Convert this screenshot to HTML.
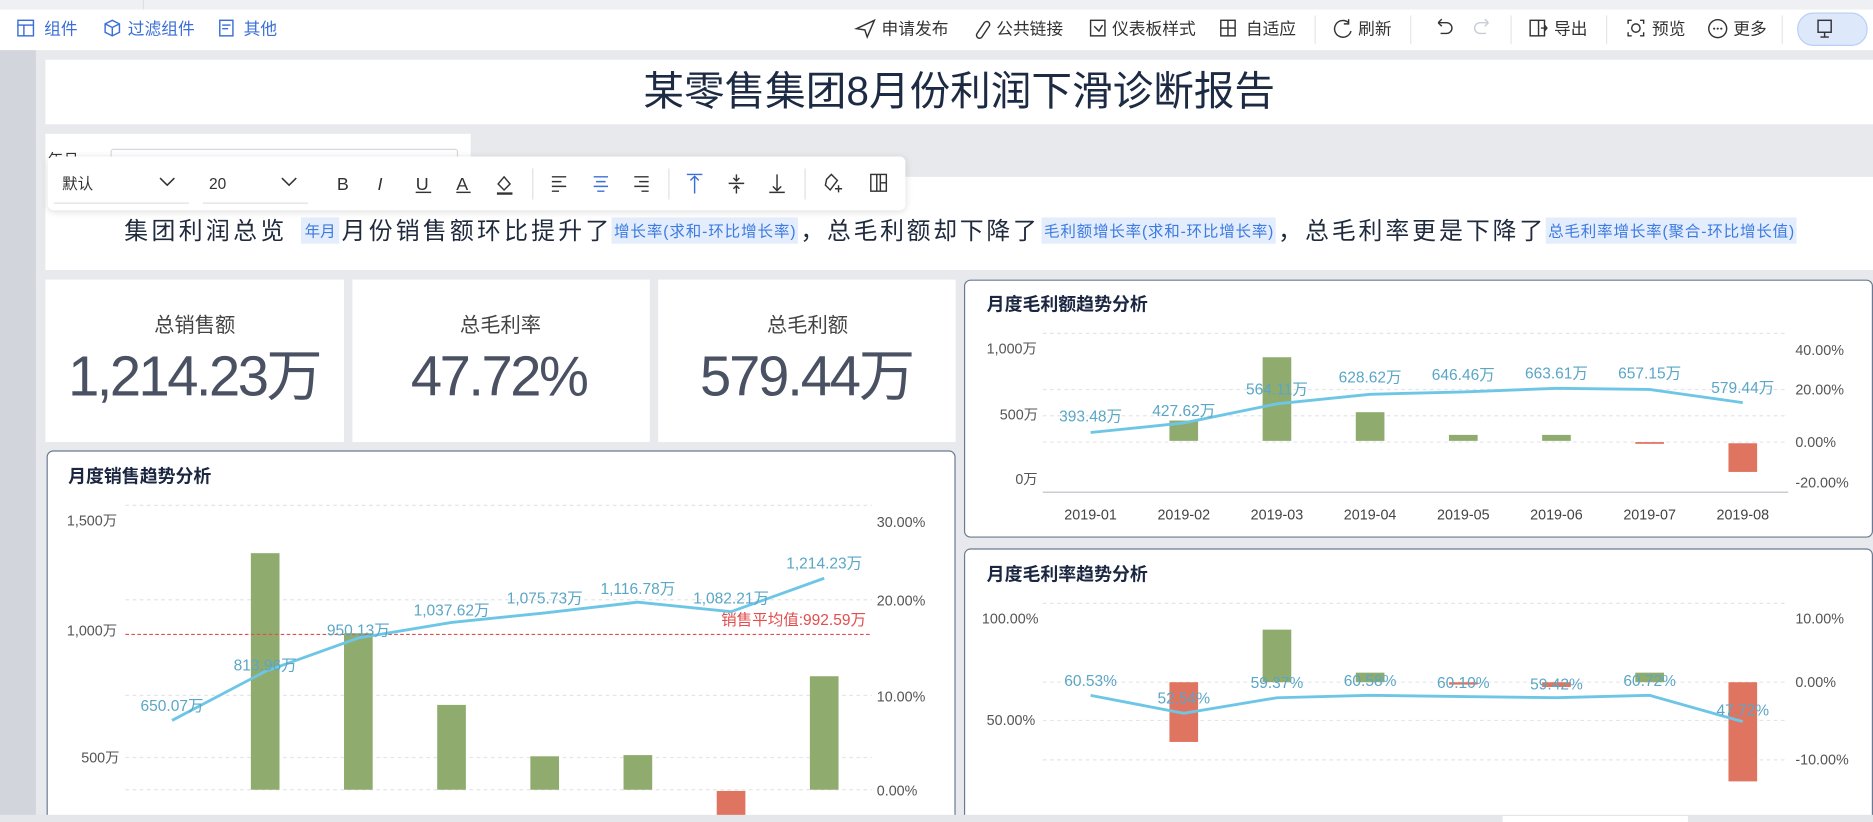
<!DOCTYPE html>
<html><head><meta charset="utf-8"><style>
html,body{margin:0;padding:0;width:1873px;height:822px;overflow:hidden;background:#e8e9ed}
svg{display:block;font-family:"Liberation Sans","Noto Sans CJK SC",sans-serif}
</style></head><body>
<svg width="1873" height="822" viewBox="0 0 1568 688" preserveAspectRatio="none" xmlns="http://www.w3.org/2000/svg">
<defs>
<filter id="sh" x="-5%" y="-30%" width="110%" height="160%"><feDropShadow dx="0" dy="1" stdDeviation="3" flood-color="#000" flood-opacity="0.15"/></filter>
</defs>
<rect x="0" y="0" width="1568" height="688" fill="#e8e9ed"/>
<rect x="0" y="0" width="1568" height="8" fill="#eef0f4"/>
<line x1="120" y1="0" x2="120" y2="8" stroke="#dcdfe6"/>
<rect x="0" y="8" width="1568" height="34" fill="#fff"/>
<rect x="0" y="42" width="30" height="646" fill="#d2d5db"/>

<g fill="none" stroke="#3a6fd8" stroke-width="1.2">
<rect x="15" y="17" width="13" height="13"/><line x1="15" y1="21" x2="28" y2="21"/><line x1="20" y1="21" x2="20" y2="30"/>
<path d="M88 20 L94 17 L100 20 L100 27 L94 30 L88 27 Z M88 20 L94 23 L100 20 M94 23 V30"/>
<rect x="184" y="17" width="11" height="13"/><line x1="186" y1="21" x2="193" y2="21"/><line x1="186" y1="24" x2="191" y2="24"/>
</g>
<g fill="#3a6fd8" font-size="14">
<text x="37" y="29">组件</text><text x="107" y="29">过滤组件</text><text x="204" y="29">其他</text>
</g>
<g fill="none" stroke="#333" stroke-width="1.2">
<path d="M717 24 L732 17 L726 31 L724 25 Z"/>
<path d="M818 28 l6 -9 a2.5 2.5 0 0 1 4 3 l-6 9 a2.5 2.5 0 0 1 -4 -3z"/>
<rect x="913" y="17" width="12" height="13"/><path d="M916 22 l4 4 l3 -5"/>
<rect x="1022" y="17" width="12" height="13"/><line x1="1028" y1="17" x2="1028" y2="30"/><line x1="1022" y1="23.5" x2="1034" y2="23.5"/>
<path d="M1129 19 a7 7 0 1 0 2 7 M1129 16 v4 h-4"/>
<path d="M1204 19 h7 a4.5 4.5 0 0 1 0 9 h-5 M1204 19 l3 -3 M1204 19 l3 3"/>
<path d="M1246 19 h-7 a4.5 4.5 0 0 0 0 9 h5 M1246 19 l-3 -3 M1246 19 l-3 3" stroke="#c8ccd4"/>
<rect x="1281" y="17" width="7" height="13"/><path d="M1288 17 h5 v13 h-5 M1290 23.5 h5 M1293 21 l2 2.5 l-2 2.5"/>
<path d="M1363 20 v-3 h3 M1373 17 h3 v3 M1376 27 v3 h-3 M1366 30 h-3 v-3"/><circle cx="1369.5" cy="23.5" r="3.5"/>
<circle cx="1438" cy="24" r="7.5"/>
</g>
<g fill="#333"><circle cx="1435" cy="24" r="0.9"/><circle cx="1438" cy="24" r="0.9"/><circle cx="1441" cy="24" r="0.9"/></g>
<g fill="#333" font-size="14">
<text x="738" y="29">申请发布</text><text x="834" y="29">公共链接</text><text x="931" y="29">仪表板样式</text><text x="1043" y="29">自适应</text>
<text x="1137" y="29">刷新</text><text x="1301" y="29">导出</text><text x="1383" y="29">预览</text><text x="1451" y="29">更多</text>
</g>
<g stroke="#e4e6eb"><line x1="1101" y1="13" x2="1101" y2="37"/><line x1="1181" y1="13" x2="1181" y2="37"/><line x1="1265" y1="13" x2="1265" y2="37"/><line x1="1345" y1="13" x2="1345" y2="37"/><line x1="1492" y1="13" x2="1492" y2="37"/></g>
<rect x="1505" y="11" width="58" height="27" rx="13" fill="#dde8fb" stroke="#b9cff5"/>
<g fill="none" stroke="#333" stroke-width="1.2"><rect x="1522" y="17" width="11" height="10"/><line x1="1527.5" y1="27" x2="1527.5" y2="31"/><line x1="1524" y1="31" x2="1531" y2="31"/></g>

<rect x="38" y="50" width="1530" height="54" fill="#fff"/>
<text x="803" y="88" font-size="34" fill="#1c2a44" text-anchor="middle">某零售集团8月份利润下滑诊断报告</text>

<rect x="38" y="112" width="356" height="40" fill="#fff"/>
<rect x="93" y="125" width="290" height="26" rx="2" fill="#fff" stroke="#d5d8de"/>
<text x="40" y="138" font-size="13" fill="#333">年月</text>

<rect x="38" y="148" width="1530" height="78" fill="#fff"/>
<g font-size="20" fill="#1f2a3d">
<text x="104" y="200" textLength="134">集团利润总览</text>
<text x="286" y="200" textLength="224">月份销售额环比提升了</text>
<text x="670" y="200" textLength="198">，总毛利额却下降了</text>
<text x="1070" y="200" textLength="222">，总毛利率更是下降了</text>
</g>
<g fill="#e4edfc"><rect x="252" y="182" width="32" height="22"/><rect x="512" y="182" width="156" height="22"/><rect x="872" y="182" width="196" height="22"/><rect x="1294" y="182" width="210" height="22"/></g>
<g font-size="13" fill="#3d7be0">
<text x="255" y="198">年月</text>
<text x="514" y="198" textLength="152">增长率(求和-环比增长率)</text>
<text x="874" y="198" textLength="192">毛利额增长率(求和-环比增长率)</text>
<text x="1296" y="198" textLength="206">总毛利率增长率(聚合-环比增长值)</text>
</g>

<g filter="url(#sh)"><rect x="40" y="131" width="718" height="45" rx="5" fill="#fff"/></g>
<g font-size="13" fill="#333"><text x="52" y="158">默认</text><text x="175" y="158">20</text></g>
<g fill="none" stroke="#333" stroke-width="1.3">
<path d="M134 149 l6 6 l6 -6"/><path d="M236 149 l6 6 l6 -6"/>
</g>
<g stroke="#dde0e5"><line x1="45" y1="170" x2="158" y2="170"/><line x1="170" y1="170" x2="258" y2="170"/><line x1="446" y1="141" x2="446" y2="167"/><line x1="560" y1="141" x2="560" y2="167"/><line x1="674" y1="141" x2="674" y2="167"/></g>
<g font-size="15" fill="#333" font-family="Liberation Sans,sans-serif">
<text x="282" y="159">B</text><text x="316" y="159" font-style="italic">I</text><text x="348" y="159">U</text><text x="382" y="159">A</text>
</g>
<g stroke="#333" stroke-width="1.2" fill="none">
<line x1="348" y1="161" x2="361" y2="161"/><line x1="382" y1="161" x2="394" y2="161"/>
<path d="M417 154 l5 -6 l5 6 l-5 5 z"/><line x1="416" y1="162" x2="429" y2="162" stroke-width="2"/>
<path d="M462 148 h12 M462 152 h8 M462 156 h12 M462 160 h6"/>
<path d="M497 148 h12 M499 152 h8 M497 156 h12 M500 160 h6" stroke="#3a6fd8"/>
<path d="M531 148 h12 M535 152 h8 M531 156 h12 M537 160 h6"/>
<path d="M575 146 h13 M581.5 148 v14 M578 151 l3.5 -3.5 l3.5 3.5" stroke="#3a6fd8"/>
<path d="M610 153.5 h13 M616.5 146 v5 M616.5 156 v6 M614 149 l2.5 2.5 l2.5 -2.5 M614 158 l2.5 -2.5 l2.5 2.5"/>
<path d="M644 161 h13 M650.5 146 v13 M647 156 l3.5 3.5 l3.5 -3.5"/>
<path d="M692 150 l4 -4 l5 5 l-6 8 l-4 -4 z M699 158 h6 M702 155 v6"/>
<rect x="729" y="146" width="13" height="14"/><line x1="734" y1="146" x2="734" y2="160"/><line x1="737" y1="146" x2="737" y2="160"/><line x1="737" y1="153" x2="742" y2="153"/>
</g>

<g fill="#fff"><rect x="38" y="234" width="250" height="136"/><rect x="295" y="234" width="249" height="136"/><rect x="551" y="234" width="249" height="136"/></g>
<g font-size="17" fill="#444" text-anchor="middle"><text x="163" y="278">总销售额</text><text x="419" y="278">总毛利率</text><text x="676" y="278">总毛利额</text></g>
<g font-size="47" fill="#4a5162"><text x="57" y="331" textLength="213">1,214.23万</text><text x="344" y="331" textLength="149">47.72%</text><text x="586" y="331" textLength="180">579.44万</text></g>

<rect x="39.5" y="377.5" width="760" height="320" rx="5" fill="#fff" stroke="#6a7a92"/>
<text x="57" y="404" font-size="15" font-weight="bold" fill="#1b2640">月度销售趋势分析</text>
<g stroke="#e3e5ea" stroke-dasharray="3 3"><line x1="105" y1="423" x2="730" y2="423"/><line x1="105" y1="502" x2="730" y2="502"/><line x1="105" y1="582" x2="730" y2="582"/><line x1="105" y1="634" x2="730" y2="634"/><line x1="105" y1="661" x2="730" y2="661"/></g>
<g font-size="12" fill="#555"><text x="56" y="440">1,500万</text><text x="56" y="532">1,000万</text><text x="68" y="638">500万</text>
<text x="734" y="441">30.00%</text><text x="734" y="507">20.00%</text><text x="734" y="587">10.00%</text><text x="734" y="666">0.00%</text></g>
<g fill="#8fac6e"><rect x="210" y="463" width="24" height="198"/><rect x="288" y="530" width="24" height="131"/><rect x="366" y="590" width="24" height="71"/><rect x="444" y="633" width="24" height="28"/><rect x="522" y="632" width="24" height="29"/><rect x="678" y="566" width="24" height="95"/></g>
<rect x="600" y="662" width="24" height="26" fill="#df7561"/>
<line x1="105" y1="531" x2="730" y2="531" stroke="#e24d4d" stroke-dasharray="3 2"/>
<text x="725" y="523" font-size="13" fill="#e24d4d" text-anchor="end">销售平均值:992.59万</text>
<polyline points="144,603 222,562 300,534 378,521 456,513 534,504 612,512 690,484" fill="none" stroke="#6ec6e6" stroke-width="2.4"/>
<g font-size="13" fill="#5aa6c6" text-anchor="middle">
<text x="144" y="595">650.07万</text><text x="222" y="561">813.96万</text><text x="300" y="532">950.13万</text><text x="378" y="515">1,037.62万</text><text x="456" y="505">1,075.73万</text><text x="534" y="497">1,116.78万</text><text x="612" y="505">1,082.21万</text><text x="690" y="476">1,214.23万</text>
</g>

<rect x="807.5" y="234.5" width="760" height="215" rx="5" fill="#fff" stroke="#6a7a92"/>
<text x="826" y="260" font-size="15" font-weight="bold" fill="#1b2640">月度毛利额趋势分析</text>
<g stroke="#e3e5ea" stroke-dasharray="3 3"><line x1="873" y1="279" x2="1497" y2="279"/><line x1="873" y1="326" x2="1497" y2="326"/><line x1="873" y1="348" x2="1497" y2="348"/><line x1="873" y1="370" x2="1497" y2="370"/></g>
<line x1="873" y1="412" x2="1497" y2="412" stroke="#c9ccd2" stroke-width="1.2"/>
<g font-size="12" fill="#555"><text x="826" y="296">1,000万</text><text x="837" y="351">500万</text><text x="850" y="405">0万</text>
<text x="1503" y="297">40.00%</text><text x="1503" y="330">20.00%</text><text x="1503" y="374">0.00%</text><text x="1503" y="408">-20.00%</text></g>
<g font-size="12" fill="#444" text-anchor="middle"><text x="913" y="435">2019-01</text><text x="991" y="435">2019-02</text><text x="1069" y="435">2019-03</text><text x="1147" y="435">2019-04</text><text x="1225" y="435">2019-05</text><text x="1303" y="435">2019-06</text><text x="1381" y="435">2019-07</text><text x="1459" y="435">2019-08</text></g>
<g fill="#8fac6e"><rect x="979" y="352" width="24" height="17"/><rect x="1057" y="299" width="24" height="70"/><rect x="1135" y="345" width="24" height="24"/><rect x="1213" y="364" width="24" height="5"/><rect x="1291" y="364" width="24" height="5"/></g>
<g fill="#df7561"><rect x="1369" y="370" width="24" height="1.5"/><rect x="1447" y="371" width="24" height="24"/></g>
<polyline points="913,362 991,354 1069,338 1147,330 1225,328 1303,325 1381,326 1459,337" fill="none" stroke="#6ec6e6" stroke-width="2.4"/>
<g font-size="13" fill="#5aa6c6" text-anchor="middle">
<text x="913" y="353">393.48万</text><text x="991" y="348">427.62万</text><text x="1069" y="330">564.11万</text><text x="1147" y="320">628.62万</text><text x="1225" y="318">646.46万</text><text x="1303" y="317">663.61万</text><text x="1381" y="317">657.15万</text><text x="1459" y="329">579.44万</text>
</g>

<rect x="807.5" y="459.5" width="760" height="240" rx="5" fill="#fff" stroke="#6a7a92"/>
<text x="826" y="486" font-size="15" font-weight="bold" fill="#1b2640">月度毛利率趋势分析</text>
<g stroke="#e3e5ea" stroke-dasharray="3 3"><line x1="873" y1="505" x2="1497" y2="505"/><line x1="873" y1="571" x2="1497" y2="571"/><line x1="873" y1="603" x2="1497" y2="603"/><line x1="873" y1="636" x2="1497" y2="636"/></g>
<g font-size="12" fill="#555"><text x="822" y="522">100.00%</text><text x="826" y="607">50.00%</text>
<text x="1503" y="522">10.00%</text><text x="1503" y="575">0.00%</text><text x="1503" y="640">-10.00%</text></g>
<g fill="#8fac6e"><rect x="1057" y="527" width="24" height="44"/><rect x="1135" y="563" width="24" height="8"/><rect x="1369" y="563" width="24" height="8"/></g>
<g fill="#df7561"><rect x="979" y="571" width="24" height="50"/><rect x="1213" y="571" width="24" height="2"/><rect x="1291" y="571" width="24" height="4"/><rect x="1447" y="571" width="24" height="83"/></g>
<polyline points="913,582 991,597 1069,584 1147,582 1225,583 1303,584 1381,582 1459,604" fill="none" stroke="#6ec6e6" stroke-width="2.4"/>
<g font-size="13" fill="#5aa6c6" text-anchor="middle">
<text x="913" y="574">60.53%</text><text x="991" y="589">52.54%</text><text x="1069" y="576">59.37%</text><text x="1147" y="574">60.58%</text><text x="1225" y="576">60.10%</text><text x="1303" y="577">59.42%</text><text x="1381" y="574">60.72%</text><text x="1459" y="599">47.72%</text>
</g>

<rect x="0" y="682" width="1568" height="6" fill="#e4e6ea"/>
<rect x="1258" y="683" width="155" height="5" fill="#fff"/>
</svg>
</body></html>
